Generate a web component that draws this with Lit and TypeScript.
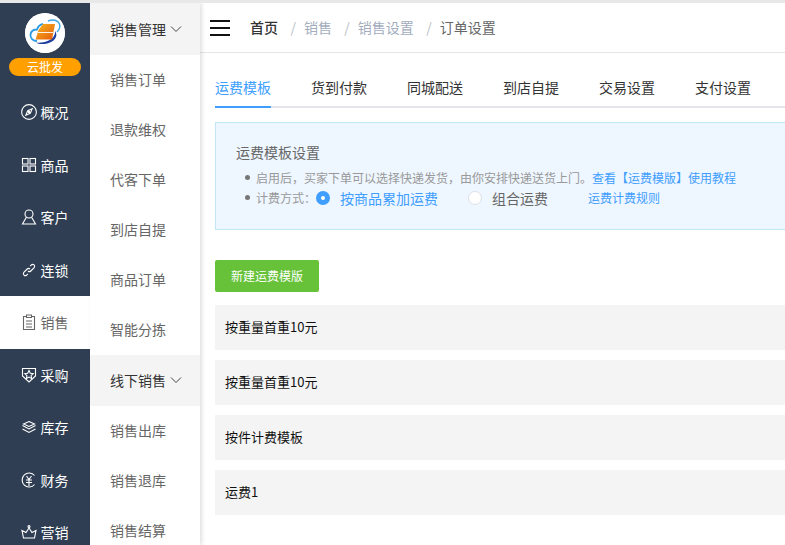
import { LitElement, html, css, svg } from "lit";
import { customElement } from "lit/decorators.js";

const stroke = (c: unknown) => html`<svg class="ico" viewBox="0 0 16 16" fill="none" stroke="currentColor" stroke-width="1.1">${c}</svg>`;

const icons: Record<string, unknown> = {
  overview: stroke(svg`<circle cx="8" cy="8" r="7.400"/><path d="M11.200 4.800 9.300 9.300 4.800 11.200l1.900-4.500z"/><circle cx="8" cy="8" r=".7"/>`),
  goods: stroke(svg`<rect x="1.500" y="1.500" width="5.500" height="5.500"/><rect x="9" y="1.500" width="5.500" height="5.500"/><rect x="1.500" y="9" width="5.500" height="5.500"/><rect x="9" y="9" width="5.500" height="5.500"/>`),
  customer: stroke(svg`<circle cx="8" cy="5" r="4"/><path d="M5.400 8.300 1.500 15h13L10.600 8.300"/>`),
  chain: stroke(svg`<path d="M9.200 4 10.400 2.800a2 2 0 0 1 2.800 2.800L9.800 9a2 2 0 0 1-2.800 0"/><path d="M6.800 12 5.600 13.200a2 2 0 0 1-2.800-2.800L6.200 7a2 2 0 0 1 2.800 0"/>`),
  sales: stroke(svg`<path d="M5 2.500H2.500v13h11v-13H11"/><path d="M5.500 1h5v2.500h-5z"/><path d="M5 7h6M5 10h6M5 13h6"/>`),
  purchase: stroke(svg`<path d="M1.500 1.500h13v7.500L8 15 1.500 9z"/><path d="M8 3.500l1.300 2.700 2.900.4-2.100 2 .5 2.900L8 10.100l-2.600 1.400.5-2.900-2.100-2 2.900-.4z"/>`),
  stock: stroke(svg`<path d="M8 2.500 13.500 5 8 7.500 2.500 5z"/><path d="M1.500 6.500 8 10l6.500-3.500"/><path d="M1.500 10 8 13.500l6.500-3.500"/>`),
  finance: stroke(svg`<path d="M13.500 3.500A7 7 0 1 0 13.500 12.500"/><path d="M5.500 4 8 7.500 10.500 4M5 8h6M5 10.500h6M8 7.500V14"/>`),
  marketing: stroke(svg`<path d="M1 6.500 5 8.500 8 4l3 4.500 4-2-1.500 7.500h-11z"/><circle cx="8" cy="2.500" r="1"/>`),
};

const mainMenu = [
  ["overview", "概况"], ["goods", "商品"], ["customer", "客户"], ["chain", "连锁"],
  ["sales", "销售"], ["purchase", "采购"], ["stock", "库存"], ["finance", "财务"], ["marketing", "营销"],
];
const subGroups: [string, string[]][] = [
  ["销售管理", ["销售订单", "退款维权", "代客下单", "到店自提", "商品订单", "智能分拣"]],
  ["线下销售", ["销售出库", "销售退库", "销售结算"]],
];
const tabs = ["运费模板", "货到付款", "同城配送", "到店自提", "交易设置", "支付设置"];
const templates = ["按重量首重10元", "按重量首重10元", "按件计费模板", "运费1"];

@customElement("app-root")
export class AppRoot extends LitElement {
  static styles = css`
    :host {
      display: block; width: 785px; height: 545px; overflow: hidden; background: #fff;
      font-family: "Noto Sans CJK SC", "Liberation Sans", sans-serif; font-size: 14px;
      box-sizing: border-box; border-top: 3px solid #e8e8e8;
    }
    * { box-sizing: border-box; }
    .shell { display: flex; height: 542px; overflow: hidden; }
    .rail { width: 90px; flex: none; background: #2f3e53; color: #fff; }
    .brand { height: 83px; display: flex; flex-direction: column; align-items: center; padding-top: 10px; }
    .logo { width: 40px; height: 40px; border-radius: 50%; background: #fff; display: block; }
    .badge {
      margin-top: 5px; width: 72px; height: 18px; border-radius: 9px; background: #ff9f00;
      font-size: 12px; line-height: 17px; text-align: center; color: #fff;
    }
    .rail-item { height: 52.5px; display: flex; align-items: center; justify-content: center; gap: 4px; padding-right: 1px; }
    .rail-item.on { background: #fff; color: #666; }
    .ico { width: 16px; height: 16px; flex: none; display: block; }
    .sub { width: 110px; flex: none; box-shadow: 2px 0 4px rgba(0,0,0,.12); position: relative; z-index: 1; }
    .sub-head {
      height: 52px; background: #f4f4f4; color: #333; display: flex; align-items: center;
      padding-left: 20px; gap: 3px;
    }
    .sub-head svg { width: 14px; height: 8px; display: block; }
    .sub-item { height: 50px; display: flex; align-items: center; padding: 0 0 2px 20px; color: #666; }
    .sub-group + .sub-group .sub-head { height: 51px; padding-bottom: 2px; }
    .main { flex: 1; min-width: 0; }
    .top { height: 50px; border-bottom: 1px solid #e6e6e8; display: flex; align-items: center; padding-left: 10px; }
    .burger { width: 20px; height: 16px; display: flex; flex-direction: column; justify-content: space-between; margin-right: 20px; }
    .burger i { display: block; height: 2px; background: #111; }
    .crumbs { display: flex; align-items: center; font-size: 14px; color: #a3adbd; padding-bottom: 2px; }
    .crumbs b { font-weight: 500; color: #333; }
    .crumbs .sep { margin: 0 8px 0 12.4px; color: #b9bfc9; }
    .crumbs .cur { color: #666; }
    .content { padding: 0 0 0 15px; width: 600px; }
    .tabs { display: flex; height: 55px; align-items: flex-end; border-bottom: 2px solid #e4e6ec; width: 570px; }
    .tab { width: 56px; margin-right: 40px; height: 28px; margin-bottom: -2px; color: #333; white-space: nowrap; line-height: 15px; }
    .tab.on { color: #409eff; border-bottom: 2px solid #409eff; }
    .notice {
      margin-top: 14px; height: 108px; width: 585px; background: #eef6ff; border: 1px solid #bfe6f2; border-right: 0;
      padding: 19px 0 0 20px; font-size: 12px; color: #999;
    }
    .notice h4 { margin: 0 0 6px; font-size: 14px; font-weight: 400; color: #666; line-height: 20px; }
    .line { display: flex; align-items: center; height: 20px; white-space: nowrap; padding-bottom: 1px; }
    .line + .line { height: 19px; padding-bottom: 0; }
    .dot { width: 5px; height: 5px; border-radius: 50%; background: #777; margin: 0 6px 0 9px; flex: none; }
    .link { color: #409eff; }
    .radio { width: 14px; height: 14px; border-radius: 50%; flex: none; display: block; }
    .radio.on { background: #409eff; position: relative; }
    .radio.on::after { content: ""; position: absolute; left: 5px; top: 5px; width: 4px; height: 4px; border-radius: 50%; background: #fff; }
    .radio.off { background: #fff; border: 1px solid #dcdfe6; }
    .opt { font-size: 14px; margin: 0 30px 0 10px; }
    .opt.plain { color: #666; margin-right: 40px; }
    .btn {
      margin-top: 30px; width: 104px; height: 32px; background: #67c23a; border-radius: 2px; color: #fff;
      font-size: 12px; display: flex; align-items: center; justify-content: center; padding-bottom: 2px;
    }
    .rows { margin-top: 13px; display: flex; flex-direction: column; gap: 10px; width: 570px; }
    .row { height: 45px; background: #f4f4f4; padding: 0 0 2px 10px; display: flex; align-items: center; font-size: 13px; color: #111; }
  `;

  logo() {
    return html`<svg class="logo" viewBox="0 0 40 40">
      <defs><linearGradient id="g" x1="0" y1="0" x2="1" y2="1"><stop offset="0" stop-color="#f7b61e"/><stop offset="1" stop-color="#e65c0c"/></linearGradient></defs>
      <circle cx="20" cy="20" r="20" fill="#fff"/>
      <path d="M12 28c-4 0-7-3-6.500-6.500C6 18 9 16.500 12 16.500c1-3 3-5 6-5.500" fill="none" stroke="#2c9be2" stroke-width="1.800"/>
      <path d="M23 8c5-2 10-1 11.500 3 1 3-.5 6-2.500 8" fill="none" stroke="#3aa6e6" stroke-width="1.400"/>
      <path d="M30 18c3 4 1 9-5 11.500-5 2-11 2-14 0 4 .5 8 0 11.500-1.500 5-2 8-5.500 7.500-10z" fill="#1f3f9f"/>
      <path d="M13.500 17 18 11h12l-3 15.500H10.500z" fill="url(#g)"/>
      <path d="M13 19.500h15" stroke="#fff" stroke-width=".9"/>
    </svg>`;
  }

  chevron() {
    return html`<svg viewBox="0 0 14 8" fill="none" stroke="#444" stroke-width="1"><path d="M2 1.500 7 6.500 12 1.500"/></svg>`;
  }

  render() {
    return html`<div class="shell">
      <nav class="rail">
        <div class="brand">${this.logo()}<div class="badge">云批发</div></div>
        ${mainMenu.map(([k, t]) => html`<div class="rail-item ${k === "sales" ? "on" : ""}">${icons[k]}<span>${t}</span></div>`)}
      </nav>
      <aside class="sub">
        ${subGroups.map(([h, items]) => html`<div class="sub-group">
          <div class="sub-head"><span>${h}</span>${this.chevron()}</div>
          ${items.map((i) => html`<div class="sub-item">${i}</div>`)}
        </div>`)}
      </aside>
      <main class="main">
        <header class="top">
          <div class="burger"><i></i><i></i><i></i></div>
          <div class="crumbs">
            <b>首页</b><span class="sep">/</span><span>销售</span><span class="sep">/</span><span>销售设置</span><span class="sep">/</span><span class="cur">订单设置</span>
          </div>
        </header>
        <div class="content">
          <div class="tabs">${tabs.map((t, i) => html`<div class="tab ${i === 0 ? "on" : ""}">${t}</div>`)}</div>
          <section class="notice">
            <h4>运费模板设置</h4>
            <div class="line"><i class="dot"></i><span>启用后，买家下单可以选择快递发货，由你安排快递送货上门。</span><span class="link">查看【运费模版】使用教程</span></div>
            <div class="line"><i class="dot"></i><span>计费方式：</span><i class="radio on"></i><span class="link opt">按商品累加运费</span><i class="radio off"></i><span class="opt plain">组合运费</span><span class="link">运费计费规则</span></div>
          </section>
          <div class="btn">新建运费模版</div>
          <div class="rows">${templates.map((t) => html`<div class="row">${t}</div>`)}</div>
        </div>
      </main>
    </div>`;
  }
}
